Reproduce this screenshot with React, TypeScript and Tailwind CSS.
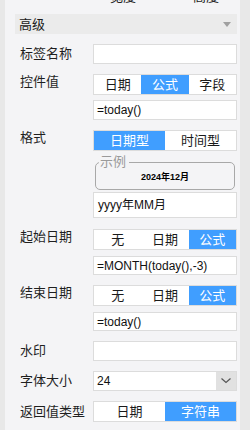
import clsx from "clsx";

const FONT = "font-['Liberation_Sans','Noto_Sans_CJK_SC',sans-serif]";

function Seg({ items, active }: { items: string[]; active: number }) {
    return (
        <div className="flex h-[21px] border border-[#dcdcdc] bg-white">
            {items.map((item, i) => (
                <div
                    key={item}
                    className={clsx(
                        "flex-1 flex items-center justify-center text-[13px] leading-none",
                        i === active ? "bg-[#409eff] text-white" : "text-[#1a1a1a]"
                    )}
                >
                    {item}
                </div>
            ))}
        </div>
    );
}

function Label({ text, top }: { text: string; top?: boolean }) {
    return (
        <div className={clsx("w-[78px] shrink-0 pl-[5px] text-[13px] leading-[16px] text-[#1f1f1f]", top && "pt-[0px]")}>
            {text}
        </div>
    );
}

export default function App() {
    return (
        <div className={clsx("w-[250px] h-[430px] overflow-hidden bg-[#e8e8e8] flex", FONT)}>
            <div className="ml-[5px] w-[235px] h-full bg-[#f4f4f6] pl-[10px] pr-[3px]">
                {/* cut-off row from above */}
                <div className="flex h-[14px] -mt-[10px] pl-[95px] gap-[57px] text-[13px] leading-[14px] text-[#222]">
                    <span>宽度</span>
                    <span>高度</span>
                </div>

                <div className="mt-[10px] h-[20px] bg-[#ebebeb] flex items-center justify-between pl-[4px] pr-[6px]">
                    <span className="text-[13px] leading-none text-[#1a1a1a]">高级</span>
                    <svg width="8" height="5" viewBox="0 0 8 5">
                        <polygon points="0,0 8,0 4,5" fill="#a0a0a0" />
                    </svg>
                </div>

                <div className="mt-[10px] flex items-center">
                    <Label text="标签名称" />
                    <div className="flex-1 h-[20px] border border-[#dcdcdc] bg-white" />
                </div>

                <div className="mt-[10px] flex">
                    <Label text="控件值" top />
                    <div className="flex-1">
                        <Seg items={["日期", "公式", "字段"]} active={1} />
                        <div className="mt-[5px] h-[20px] flex items-center border border-[#dcdcdc] bg-white pl-[3px] text-[12px] text-[#111]">
                            =today()
                        </div>
                    </div>
                </div>

                <div className="mt-[10px] flex">
                    <Label text="格式" top />
                    <div className="flex-1">
                        <Seg items={["日期型", "时间型"]} active={0} />
                        <fieldset className="mt-[4px] mx-[2px] border border-[#a8a8a8] rounded-[5px] px-[3px] pb-[3px]">
                            <legend className="pl-[1px] pr-[3px] text-[13px] leading-[14px] text-[#9a9a9a]">示例</legend>
                            <div className="h-[17px] flex items-center justify-center text-[9px] font-bold leading-none text-black">
                                2024年12月
                            </div>
                        </fieldset>
                        <div className="mt-[2px] h-[26px] flex items-center border border-[#dcdcdc] bg-white pl-[4px] text-[12px] text-[#111]">
                            yyyy年MM月
                        </div>
                    </div>
                </div>

                <div className="mt-[11px] flex">
                    <Label text="起始日期" top />
                    <div className="flex-1">
                        <Seg items={["无", "日期", "公式"]} active={2} />
                        <div className="mt-[6px] h-[19px] flex items-center border border-[#dcdcdc] bg-white pl-[3px] text-[12px] text-[#111]">
                            =MONTH(today(),-3)
                        </div>
                    </div>
                </div>

                <div className="mt-[10px] flex">
                    <Label text="结束日期" top />
                    <div className="flex-1">
                        <Seg items={["无", "日期", "公式"]} active={2} />
                        <div className="mt-[6px] h-[19px] flex items-center border border-[#dcdcdc] bg-white pl-[3px] text-[12px] text-[#111]">
                            =today()
                        </div>
                    </div>
                </div>

                <div className="mt-[10px] flex items-center">
                    <Label text="水印" />
                    <div className="flex-1 h-[20px] border border-[#dcdcdc] bg-white" />
                </div>

                <div className="mt-[10px] flex items-center">
                    <Label text="字体大小" />
                    <div className="flex-1 h-[20px] flex border border-[#dcdcdc] bg-white">
                        <div className="flex-1 flex items-center pl-[3px] text-[12px] text-[#111]">24</div>
                        <div className="w-[20px] bg-[#e1e1e1] flex items-center justify-center">
                            <svg width="10" height="6" viewBox="0 0 10 6">
                                <polyline points="0.5,0.5 5,4.5 9.5,0.5" fill="none" stroke="#555" strokeWidth="1.2" />
                            </svg>
                        </div>
                    </div>
                </div>

                <div className="mt-[10px] flex items-center">
                    <Label text="返回值类型" />
                    <div className="flex-1">
                        <Seg items={["日期", "字符串"]} active={1} />
                    </div>
                </div>
            </div>
        </div>
    );
}
